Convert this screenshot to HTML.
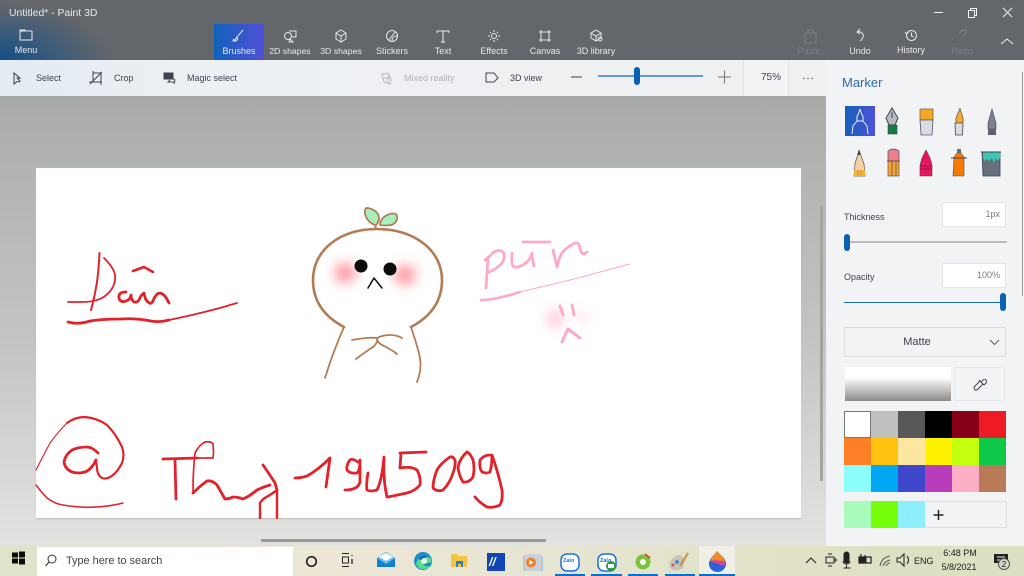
<!DOCTYPE html>
<html><head><meta charset="utf-8">
<style>
html,body{margin:0;padding:0;width:1024px;height:576px;overflow:hidden;background:#aaa}
body{position:relative;font-family:"Liberation Sans",sans-serif}
.a{position:absolute}
.t{position:absolute;white-space:nowrap;font-size:9px;line-height:11px}
.c{transform:translateX(-50%)}
.w{color:#e8e9ea}
.d{color:#3c4250}
.box{position:absolute;box-sizing:border-box}
svg{position:absolute;overflow:visible}
.ic{fill:none;stroke:#e6e7e8;stroke-width:1}
.id{fill:none;stroke:#3c4250;stroke-width:1}
</style></head><body>
<!-- canvas bg -->
<div class="a" style="left:0;top:96px;width:826px;height:450px;background:linear-gradient(#a8aaa7 0,#b4b6b3 90px,#c4c5c3 250px,#dcdddb 400px,#e2e3e1 450px)"></div>
<div class="a" style="left:36px;top:168px;width:765px;height:350px;background:#fff;box-shadow:0 1px 1px #bbb"></div>
<!-- title bar -->
<div class="a" style="left:0;top:0;width:1024px;height:60px;background:#63666b"></div>
<div class="a" style="left:0;top:0;width:130px;height:60px;background:radial-gradient(ellipse 110px 55px at 0 60px,#144f86 0,#2f587e 35%,rgba(99,102,107,0) 100%)"></div>
<div class="t w" style="left:9px;top:8px;font-size:10.400px;letter-spacing:0">Untitled* - Paint 3D</div>
<svg style="left:0;top:0" width="1024" height="60">
<path class="ic" d="M20 31h12v9h-12zM20 31v-1h5l1 1"/>
<g stroke="#f2f2f2" fill="none">
<path d="M934 12.500h9"/><path d="M968.500 10.500h6v7h-6z M970.500 10.500v-2h6v7h-2" stroke-width="1"/>
<path d="M1003 8l9 9M1012 8l-9 9"/></g>
</svg>
<div class="t w c" style="left:26px;top:45px">Menu</div>
<div class="a" style="left:214px;top:24px;width:50px;height:36px;background:linear-gradient(90deg,#0f62bb,#5150d8)"></div>
<svg style="left:0;top:0" width="1024" height="60">
<g class="ic">
<path d="M243 30l-6 7-2 3h-1M236 37l2 2M234 39c-1 1-1 2-1 2h3l2-2"/>
<path d="M289 31h7v6h-4"/><circle cx="288" cy="36" r="3.500"/><path d="M290 39l3 3h-4z"/>
<path d="M341 30l5 3v6l-5 3-5-3v-6zM336 33l5 3 5-3M341 36v6"/>
<circle cx="392" cy="36" r="5.500"/><path d="M389 40l6-8M392 41c0-3 1-5 5-5"/>
<path d="M437 31h12M443 31v11M441 42h4M437 31v2M449 31v2" stroke="#eee"/>
<circle cx="494" cy="36" r="2.500"/><path d="M494 30v2M494 40v2M488 36h2M498 36h2M490 32l1 1M497 39l1 1M498 32l-1 1M491 39l-1 1"/>
<path d="M541 32h8v8h-8zM541 30v2M549 30v2M541 40v2M549 40v2M539 32h2M549 32h2M539 40h2M549 40h2"/>
<path d="M596 30l5 3v5l-5 3-5-3v-5zM591 33l5 3 5-3M596 36v5"/><circle cx="600" cy="39" r="2"/>
<path d="M860 34l-3-2 3-3M858 32c6-1 7 6 2 9" stroke="#eee"/>
<circle cx="911.500" cy="35.500" r="5"/><path d="M911.500 32.500v3.500l2 1M905 32l1.500 1.500 2-1"/>
<path d="M1001 44l6-5 6 5" stroke="#eee"/>
</g>
<g class="ic" style="stroke:#7b7e83">
<path d="M805 33h11v10h-11zM808 33v-3h5v3"/>
<path d="M959 33l4-2-2-1h5v3l-4 5"/>
</g>
</svg>
<div class="t w c" style="left:239px;top:46px">Brushes</div>
<div class="t w c" style="left:290px;top:46px;font-size:8.700px">2D shapes</div>
<div class="t w c" style="left:341px;top:46px;font-size:8.700px">3D shapes</div>
<div class="t w c" style="left:392px;top:46px">Stickers</div>
<div class="t w c" style="left:443px;top:46px">Text</div>
<div class="t w c" style="left:494px;top:46px">Effects</div>
<div class="t w c" style="left:545px;top:46px">Canvas</div>
<div class="t w c" style="left:596px;top:46px">3D library</div>
<div class="t c" style="left:809px;top:46px;color:#7b7e83">Paste</div>
<div class="t w c" style="left:860px;top:46px">Undo</div>
<div class="t w c" style="left:911px;top:45px">History</div>
<div class="t c" style="left:962px;top:46px;color:#7b7e83">Redo</div>
<!-- toolbar -->
<div class="a" style="left:0;top:60px;width:826px;height:36px;background:linear-gradient(90deg,#e3ebf3 0,#edf0f3 200px,#eff0f2 100%)"></div>
<div class="box" style="left:743px;top:60px;width:46px;height:36px;background:#f2f3f4;border-left:1px solid #dfe0e2;border-right:1px solid #e3e4e6"></div>
<svg style="left:0;top:60px" width="826" height="36">
<g class="id">
<path d="M14 13v11l3-2.500 2 .5 1-1-3-3h3z"/>
<path d="M93 11v11h9M93 13h8v10M90 24l12-12M89 22h4M101 23v2"/>
<rect x="164" y="13" width="9" height="6" fill="#3c4250"/><path d="M171 17l4 3-1 4M170 20l-2 2 6 0"/>
<g style="stroke:#b5b8be"><path d="M382 14l6-1 3 6-1 5-6-2zM384 18h6M388 15v8"/></g>
<path d="M486 13h8l4 5-4 4h-8z"/>
</g>
<path d="M571 17h11" stroke="#3c4250" fill="none"/>
<path d="M718 17h13M724.500 10.500v13" stroke="#70747c" fill="none"/>
<path d="M598 16h105" stroke="#0f64b8" stroke-width="1.300"/>
<rect x="634" y="7" width="6" height="18" rx="3" fill="#0a60b5"/>
<g fill="#3c4250"><circle cx="804" cy="18.500" r=".7"/><circle cx="808" cy="18.500" r=".7"/><circle cx="812" cy="18.500" r=".7"/></g>
</svg>
<div class="t d" style="left:36px;top:73px">Select</div>
<div class="t d" style="left:114px;top:73px">Crop</div>
<div class="t d" style="left:187px;top:73px">Magic select</div>
<div class="t" style="left:404px;top:73px;color:#b0b3b8">Mixed reality</div>
<div class="t d" style="left:510px;top:73px">3D view</div>
<div class="t d" style="left:761px;top:72px;font-size:10px">75%</div>
<!-- right panel -->
<div class="a" style="left:826px;top:60px;width:198px;height:486px;background:#f1f3f5"></div>
<div class="a" style="left:1022px;top:72px;width:1px;height:224px;background:#9ca0a5"></div>
<div class="a" style="left:820px;top:206px;width:3px;height:275px;background:#a3a5a4"></div>
<div class="t" style="left:842px;top:75px;font-size:13px;line-height:15px;color:#2a6cb0">Marker</div>
<div class="a" style="left:845px;top:106px;width:30px;height:30px;background:linear-gradient(90deg,#1560bb,#4d52d8)"></div>
<svg style="left:0;top:0" width="1024" height="576">
<!-- row 1 -->
<path d="M860 109l-2 6-1 1v5l-4 5-1 8M860 109l2 6 1 1v5l4 5 1 8M857 121h6" fill="none" stroke="#fff" stroke-width=".9"/>
<path d="M892 108l6 10-3 7h-6l-3-7z" fill="#b8bcc2" stroke="#3c4250"/><path d="M892 112v6" stroke="#3c4250"/><rect x="888" y="125" width="9" height="9" fill="#147d3f" stroke="#3c4250" stroke-width=".6"/>
<rect x="920" y="109" width="13" height="11" fill="#f5a623" stroke="#7a6a50" stroke-width=".8"/><path d="M920 120h13l-1 15h-11z" fill="#d9dbe0" stroke="#555a66" stroke-width=".8"/>
<path d="M960 108c-1 5-5 8-4 14 1 2 6 2 7 0 1-5-2-8-3-14z" fill="#f7a92e" stroke="#554"  stroke-width=".7"/><path d="M955 123h8l-.5 12h-7z" fill="#d9dbe0" stroke="#444a58" stroke-width=".8"/>
<path d="M992 109l4 14v6h-8v-6z" fill="#7c808e" stroke="#444a58" stroke-width=".6"/><rect x="988" y="129" width="8" height="6" fill="#5d6170"/>
<!-- row 2 -->
<path d="M859 150l5 14 1 12h-11l1-12z" fill="#f4cfa8" stroke="#555" stroke-width=".7"/><path d="M854 170h11v6h-11z" fill="#f4b62e"/><path d="M859 150l1.500 5h-3z" fill="#444"/><path d="M858 170v6M861 170v6" stroke="#a67" stroke-width=".5"/>
<path d="M888 151q5-4 11 0v10h-11z" fill="#ee7f92" stroke="#554a50" stroke-width=".7"/><rect x="888" y="161" width="11" height="15" fill="#f3a33b" stroke="#6a5a40" stroke-width=".7"/><path d="M887 161h13M892 161v15M896 161v15" stroke="#5a4a40" stroke-width=".7"/>
<path d="M926 150l4 8 2 7v11h-12v-11l2-7z" fill="#e8145f" stroke="#7a3050" stroke-width=".6"/><path d="M920 166h12M920 169h12" stroke="#7a1a40" stroke-width=".8"/>
<rect x="957" y="149" width="4" height="4" fill="#6a6d78"/><path d="M954 157l3-4h4l3 4v19h-11z" fill="#f77a07" stroke="#553" stroke-width=".6"/><path d="M951 158h16" stroke="#3c4250"/>
<path d="M982 152h18v24h-17z" fill="#68707c" stroke="#3c4250" stroke-width=".8"/><path d="M983 152h17v6l-2 3-2-3-2 5-2-5-3 3-2-2-2 2-2-3z" fill="#3ac9b4"/><path d="M981 152h20" stroke="#3c4250"/>
</svg>
<div class="t d" style="left:844px;top:212px">Thickness</div>
<div class="t d" style="left:844px;top:272px">Opacity</div>
<div class="box" style="left:942px;top:202px;width:64px;height:25px;background:#fff;border:1px solid #e2e3e6"></div>
<div class="box" style="left:942px;top:263px;width:64px;height:25px;background:#fff;border:1px solid #e2e3e6"></div>
<div class="t" style="right:24px;top:209px;color:#777b84">1px</div>
<div class="t" style="right:24px;top:270px;color:#777b84">100%</div>
<div class="a" style="left:844px;top:241px;width:163px;height:1.500px;background:#b9bbbd"></div>
<div class="a" style="left:844px;top:301.500px;width:160px;height:1.500px;background:#1a66b0"></div>
<div class="a" style="left:844px;top:234px;width:6px;height:17px;border-radius:3px;background:#0a60b5"></div>
<div class="a" style="left:1000px;top:293px;width:6px;height:18px;border-radius:3px;background:#0a60b5"></div>
<div class="box" style="left:844px;top:327px;width:162px;height:30px;border:1px solid #d9dbde;background:#f1f3f5"></div>
<div class="t c d" style="left:917px;top:336px;font-size:11px;line-height:13px">Matte</div>
<svg style="left:0;top:0" width="1024" height="576"><path d="M990 340l4.500 4.500 4.500-4.500" fill="none" stroke="#555b66"/></svg>
<div class="a" style="left:845px;top:367px;width:106px;height:34px;background:linear-gradient(#fff 0,#fff 30%,#d8d7d6 55%,#8d8b88 100%)"></div>
<div class="box" style="left:954px;top:367px;width:51px;height:34px;border:1px solid #e6e7e9;background:#f2f3f5"></div>
<svg style="left:0;top:0" width="1024" height="576"><path d="M975 390l-1-3 6-6 3 3-6 6zM979 380l5 5M981 382l2-2a1.500 1.500 0 0 1 3 3l-2 2" fill="none" stroke="#3c4250" stroke-width="1"/></svg>
<div class="a" style="left:844px;top:411px;width:162px;height:81px;display:grid;grid-template-columns:repeat(6,27px);grid-template-rows:repeat(3,27px)">
<div style="background:#fff;box-sizing:border-box;border:1px solid #777"></div><div style="background:#c0c0c0"></div><div style="background:#585858"></div><div style="background:#000"></div><div style="background:#880018"></div><div style="background:#ed1c24"></div>
<div style="background:#ff7f27"></div><div style="background:#ffc20e"></div><div style="background:#fde6a0"></div><div style="background:#fff200"></div><div style="background:#c4ff0e"></div><div style="background:#0ec84a"></div>
<div style="background:#8cfffb"></div><div style="background:#00a8f3"></div><div style="background:#3f48cc"></div><div style="background:#b83dba"></div><div style="background:#ffaec8"></div><div style="background:#b97a57"></div>
</div>
<div class="box" style="left:844px;top:501px;width:163px;height:27px;border:1px solid #dcdee0;background:#f1f3f5"></div>
<div class="a" style="left:844px;top:501px;width:27px;height:27px;background:#a9fbbb"></div>
<div class="a" style="left:871px;top:501px;width:27px;height:27px;background:#76ff0b"></div>
<div class="a" style="left:898px;top:501px;width:27px;height:27px;background:#8ceffb"></div>
<svg style="left:0;top:0" width="1024" height="576"><path d="M938.500 510v10M933.500 515h10" stroke="#222" stroke-width="1.500"/></svg>
<!-- scrollbar -->
<div class="a" style="left:261px;top:539px;width:285px;height:3px;background:#9c9c9c"></div>
<!-- drawing -->
<svg style="left:0;top:0" width="1024" height="576" fill="none" stroke-linecap="round" stroke-linejoin="round">
<defs><filter id="b" x="-100%" y="-100%" width="300%" height="300%"><feGaussianBlur stdDeviation="6"/></filter><filter id="s" x="-5%" y="-5%" width="110%" height="110%"><feGaussianBlur stdDeviation=".35"/></filter></defs>
<ellipse cx="345" cy="273" rx="11" ry="10" fill="#ff98a2" filter="url(#b)"/>
<ellipse cx="405" cy="275" rx="11" ry="10" fill="#ff98a2" filter="url(#b)"/>
<ellipse cx="555" cy="319" rx="8" ry="9" fill="#ffb0c6" filter="url(#b)" opacity=".7"/>
<ellipse cx="582" cy="317" rx="6" ry="7" fill="#ffc4d4" filter="url(#b)" opacity=".4"/>
<g filter="url(#s)">
<!-- Dan -->
<g stroke="#e2212b" stroke-width="2">
<path d="M99.500 253Q98.500 273 96.500 285Q94.500 297 91 310" stroke-width="2"/>
<path d="M104 258Q114 268 115 275Q116 282 112 288.500Q108 295 101 298.500Q94 302 81 302L68 302" stroke-width="1.800"/>
<path d="M126 292Q118 292 119 298Q120 303 126 301Q130 300 131 295Q131 300 134 302Q138 303 140 298Q141 295 144 293Q145 300 148 302Q151 305 153 301Q156 293 160 293Q165 294 169 303" stroke-width="2.800"/>
<path d="M133 271L144 267L153 272" stroke-width="2.600"/>
<path d="M68 322Q78 325 90 321Q103 319 120 319Q136 318 148 320.500Q159 323 169 320" stroke-width="2.800"/>
<path d="M169 320Q179 318 196 314Q213 310 225 306.500L237 303" stroke-width="1.900"/>
</g>
<!-- bear -->
<g stroke="#b27b56" stroke-width="1.800">
<path d="M344 327C325 317 313 302 313 280C313 250 340 229 377 229C414 229 442 250 442 280C442 302 430 317 411 327" stroke-width="2.600"/>
<path d="M344 327Q333 352 325 378"/><path d="M411 327Q418 348 420 358Q422 370 417 382"/>
<path d="M352 340Q368 337 377 338Q377 343 384 346Q392 350 397 354"/>
<path d="M356 359Q368 350 373 347Q378 343 377 338Q383 335 390 335Q397 335 402 338"/>
<path d="M375 229L376 225"/>
<path d="M375 225C366 222 363 212 366 208C372 208 379 212 379 218Q379 222 376 225z" fill="#a9efbe"/>
<path d="M380 225C380 217 390 212 396 214C399 218 396 224 391 225Q385 226 380 225z" fill="#a9efbe"/>
</g>
<circle cx="361" cy="266" r="6.500" fill="#0d0a0c"/><circle cx="390" cy="269" r="6.500" fill="#0d0a0c"/>
<path d="M368 288L374 278L382 288" stroke="#111" stroke-width="1.500"/>
<!-- pun -->
<g stroke="#ffaac4" stroke-width="2.800">
<path d="M488 258L486 288"/>
<path d="M485 260Q490 256 494 252Q500 249 503 252Q506 257 502 263Q497 269 487 273"/>
<path d="M512 253Q511 266 514 267Q520 268 527 262Q531 258 532 253Q532 260 534 266"/>
<path d="M523 242L550 242"/>
<path d="M553 250Q555 258 557 267Q559 258 562 253Q568 246 575 243Q579 242 580 248Q581 254 584 254L587 252"/>
<path d="M481 300Q495 300 520 292" stroke-width="2.600"/>
<path d="M520 292L570 280L630 264" stroke-width="1"/>
<path d="M560 306L563 315M572 305L574 315"/>
<path d="M562 342L568 329L580 338" stroke-width="3"/>
</g>
<!-- @ -->
<g stroke="#e2212b" stroke-width="2.800">
<path d="M36 470Q43 456 50 443Q58 432 67 423" stroke-width="1.200"/>
<path d="M67 423Q75 417 85 417Q97 418 107 425Q116 434 122 447Q125 455 122 463Q118 471 113 475Q107 480 102 478Q97 475 97 468L96 460" stroke-width="2.200"/>
<path d="M98 453Q92 447 87 447Q78 447 72 450Q65 455 64 462Q65 469 72 472Q78 474 85 472Q92 469 96 460" stroke-width="2.800"/>
<path d="M36 485Q42 493 47 498Q55 504 63 505Q80 508 97 507Q112 506 123 503" stroke-width="1.500"/>
<!-- Thuy -->
<path d="M163 459L197 458"/>
<path d="M175 460L176 499"/>
<path d="M193 493Q193 470 195 453Q199 445 205 442Q211 441 213 444Q214 452 213 458L197 458" stroke-width="1.700"/>
<path d="M193 493Q200 486 207 481Q212 480 217 485Q221 492 225 499Q229 499 233 497Q238 497 243 499Q250 496 257 490Q263 487 270 485"/>
<path d="M263 465Q270 475 275 483L277 490"/>
<path d="M260 518V503Q262 499 270 495L277 490V518" stroke-width="2.400"/>
<!-- 1905009 -->
<path d="M295 478Q301 478 307 476Q318 470 330 458L326 487"/>
<path d="M358 462Q352 458 350 460Q346 465 347 470Q350 474 357 473Q360 470 360 460L360 482Q358 490 345 490"/>
<path d="M368 473Q366 485 367 490Q370 492 377 490Q382 480 384 457Q383 480 387 497"/>
<path d="M400 453L426 452M401 453L400 468Q412 466 417 470Q421 477 420 485Q415 491 407 493L388 497"/>
<path d="M450 457Q441 463 437 470Q433 480 433 488Q437 492 443 490Q450 483 453 473Q456 465 455 460Q453 456 450 457"/>
<path d="M467 452Q460 458 458 467Q459 476 463 482Q469 483 473 477Q475 468 473 460Q470 453 467 452"/>
<path d="M490 455Q484 455 480 460Q479 468 482 472Q487 474 490 472Q492 465 492 455Q498 472 502 490Q503 500 500 505Q494 508 487 507Q480 503 475 497"/>
</g>
</g>
</svg>
<!-- taskbar -->
<div class="a" style="left:0;top:546px;width:1024px;height:30px;background:linear-gradient(90deg,#dfe3c9 0,#ede6d6 330px,#e6e5d2 560px,#e0e1c5 800px,#dcdfc2 1024px)"></div>
<div class="a" style="left:37px;top:547px;width:256px;height:29px;background:#fff"></div>
<div class="a" style="left:699px;top:546px;width:36px;height:30px;background:#f0efe6"></div>
<svg style="left:0;top:546px" width="1024" height="30">
<g fill="#0c0c0c"><rect x="12" y="6.500" width="6" height="5"/><rect x="19" y="5.500" width="6" height="6"/><rect x="12" y="12.500" width="6" height="5"/><rect x="19" y="12.500" width="6" height="6"/></g>
<circle cx="52" cy="13" r="4" fill="none" stroke="#333"/><path d="M49 16l-3.500 4" stroke="#333" stroke-width="1.200"/>
<circle cx="311.500" cy="15.500" r="4.800" fill="none" stroke="#111" stroke-width="1.500"/>
<g stroke="#222" fill="none"><path d="M342 7.500h7M342 20.500h7M342.500 11h6v6h-6z"/><path d="M352 9v1M352 13v5" stroke-width="1.300"/></g>
<path d="M377 12l9-6 9 6v9h-18z" fill="#0f7fd0"/><path d="M377 12l9 6 9-6v0l-9-6z" fill="#67c0f0"/><path d="M379 11l7-4 7 4-7 4z" fill="#fff"/>
<circle cx="423" cy="15" r="9" fill="#1a8fc8"/><path d="M416 18c2-8 11-10 15-5 1 2 0 4-3 4h-5c0 3 4 5 9 2-3 5-12 5-14 2z" fill="#5fdc8a"/><path d="M419 13c2-3 7-4 9-2-2 0-6 1-6 4z" fill="#0b5ea8"/><circle cx="424" cy="15" r="3" fill="#fff" opacity=".85"/>
<path d="M451 8h6l2 2h8v11h-16z" fill="#f4c542"/><rect x="456" y="15" width="7" height="6" fill="#2a7fd0"/><rect x="458" y="18" width="3" height="3" fill="#f4c542"/>
<rect x="487" y="7" width="18" height="18" fill="#1443b8"/>
<path d="M523 10h20v15h-20z" fill="#bcc6d2"/><rect x="525" y="8" width="16" height="17" rx="2" fill="#c9d2dc"/><circle cx="531" cy="16.500" r="5" fill="#f08020"/><path d="M529.500 14l4 2.500-4 2.500z" fill="#fff"/>
<rect x="561" y="8" width="18" height="17" rx="6" fill="#fff" stroke="#1c6fe0" stroke-width="1.500"/>
<rect x="598" y="8" width="18" height="17" rx="6" fill="#fff" stroke="#1c6fe0" stroke-width="1.500"/><circle cx="611" cy="20" r="5" fill="#2f9a3f"/><rect x="608" y="18" width="6" height="4" fill="#fff"/>
<circle cx="643" cy="16" r="7.500" fill="#7cc33a"/><circle cx="643" cy="16" r="3" fill="#fff"/><path d="M645 8l5 4" stroke="#e33" stroke-width="1.500"/>
<path d="M670 22c-2-6 3-11 8-13 4 0 5 3 7 5l-2 8c-4 3-10 3-13 0z" fill="#c8c4b8"/><circle cx="677" cy="16" r="2" fill="#4a8ad0"/><circle cx="673" cy="19" r="1.500" fill="#e05050"/><path d="M680 20l8-13" stroke="#c89040" stroke-width="2"/>
<path d="M717 5c-2 4-8 7-8 13a8.500 8 0 0 0 17 0c0-6-6-9-9-13z" fill="#2a62d8"/><path d="M717 5c-2 4-6 6-7 10 4-1 11-1 15 1-1-5-5-7-8-11z" fill="#f28c1e"/><path d="M710 15c5-1 10-1 15 1 0 3-1 3-2 4-5-3-10-3-13-5z" fill="#e0409a"/>
<g fill="#0a70cc"><rect x="555" y="28" width="30" height="2"/><rect x="591" y="28" width="31" height="2"/><rect x="628" y="28" width="30" height="2"/><rect x="665" y="28" width="30" height="2"/><rect x="699" y="28" width="36" height="2"/></g>
<g stroke="#222" fill="none">
<path d="M806 17l5-5 5 5" stroke-width="1.100"/>
<path d="M826 11h8v6h-8zM828 8h4M828 20h4M834 13h2v2h-2"/>
<rect x="844" y="6" width="5" height="11" rx="2.500" fill="#222"/><path d="M843 15c0 4 7 4 7 0M846.500 19v3h-3h7"/>
<path d="M859 11h12v6h-12zM861 8v3M865 9v2" stroke-width="1.200"/><rect x="860" y="12" width="6" height="4" fill="#222"/>
<path d="M880 20c1-5 4-9 10-10M883 20c1-3 3-5 7-6M886 20c1-2 2-3 4-3" stroke="#555"/>
<path d="M897 12h3l4-4v12l-4-4h-3zM907 10c2 2 2 6 0 8"/>
</g>
<path d="M994 8h14v9h-6l-3 4v-4h-5z" fill="#222"/><path d="M997 11h8M997 14h8" stroke="#eee"/>
<circle cx="1004" cy="18" r="5.500" fill="#d8d8c4" stroke="#555"/>
</svg>
<div class="a" style="left:66px;top:554px;font-size:10.900px;line-height:15px;color:#444;white-space:nowrap">Type here to search</div>
<div class="t" style="left:914px;top:556px;font-size:9px;color:#222">ENG</div>
<div class="t c" style="left:960px;top:548px;color:#222">6:48 PM</div>
<div class="t c" style="left:959px;top:562px;color:#222">5/8/2021</div>
<div class="t c" style="left:1004px;top:559px;font-size:8px;color:#111">2</div>
<div class="t" style="left:489px;top:555px;font-size:12px;line-height:14px;font-weight:bold;font-style:italic;color:#fff">//</div>
<div class="t" style="left:563px;top:558px;font-size:5.500px;line-height:7px;font-weight:bold;color:#1c6fe0">Zalo</div>
<div class="t" style="left:600px;top:558px;font-size:5.500px;line-height:7px;font-weight:bold;color:#1c6fe0">Zalo</div>
</body></html>
